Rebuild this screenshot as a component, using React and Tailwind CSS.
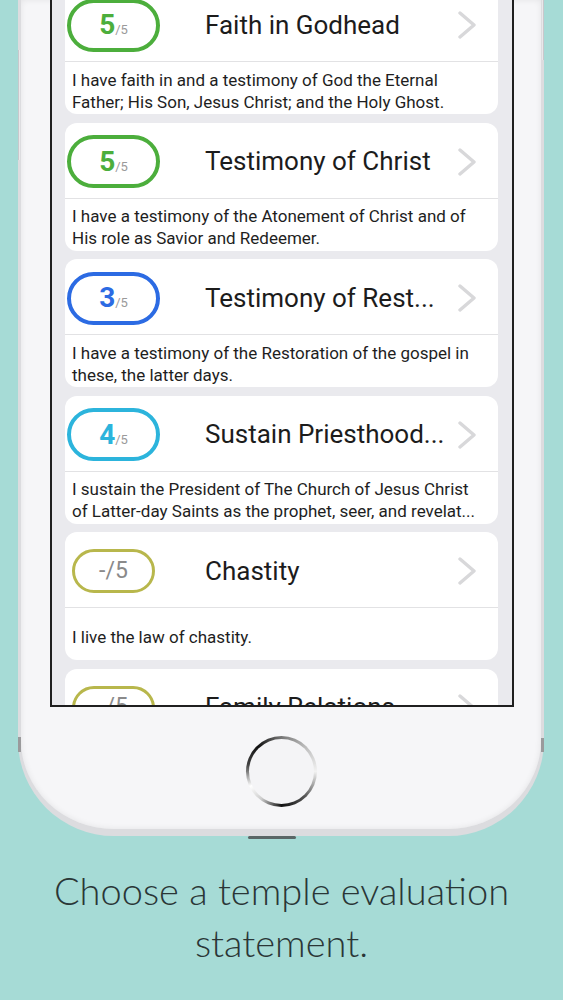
import React from 'react'

const items = [
  { score: '5', color: 'green', title: 'Faith in Godhead', text: 'I have faith in and a testimony of God the Eternal Father; His Son, Jesus Christ; and the Holy Ghost.' },
  { score: '5', color: 'green', title: 'Testimony of Christ', text: 'I have a testimony of the Atonement of Christ and of His role as Savior and Redeemer.' },
  { score: '3', color: 'blue', title: 'Testimony of Rest...', text: 'I have a testimony of the Restoration of the gospel in these, the latter days.' },
  { score: '4', color: 'cyan', title: 'Sustain Priesthood...', text: 'I sustain the President of The Church of Jesus Christ of Latter-day Saints as the prophet, seer, and revelat...' },
  { score: null, color: 'olive', title: 'Chastity', text: 'I live the law of chastity.' },
  { score: null, color: 'olive', title: 'Family Relations', text: 'I strive to keep the covenants I have made.' },
]

const pillStyles = {
  green: 'border-[#4cae3c] text-[#4cae3c]',
  blue: 'border-[#2c6be3] text-[#2c6be3]',
  cyan: 'border-[#2cb4dc] text-[#2cb4dc]',
}

const Pill = ({ score, color }) => {
  if (!score) {
    return (
      <div className="w-[83px] h-[44px] rounded-full border-[3px] border-[#b8b74c] flex items-center justify-center text-[23px] text-[#8a8a8a]">
        -/5
      </div>
    )
  }
  return (
    <div className={`w-[93px] h-[53px] rounded-full border-[4px] flex items-center justify-center ${pillStyles[color]}`}>
      <span className="text-[28px] font-bold leading-none">{score}</span>
      <span className="text-[13px] text-[#9a9a9a] leading-none mt-[9px]">/5</span>
    </div>
  )
}

const Chevron = () => (
  <svg width="22" height="28" viewBox="0 0 22 28" fill="none">
    <path d="M4 2 L18 14 L4 26" stroke="#d8d8da" strokeWidth="3.4" strokeLinecap="round" strokeLinejoin="round" />
  </svg>
)

const Card = ({ item }) => (
  <div className="bg-white rounded-[12px] overflow-hidden">
    <div className="h-[75px] pt-[3px] flex items-center">
      <div className="w-[97px] flex justify-center">
        <Pill score={item.score} color={item.color} />
      </div>
      <div className="ml-[43px] flex-1 text-[26px] text-[#1c1c1c] whitespace-nowrap overflow-hidden">{item.title}</div>
      <div className="pr-[20px] pl-2 flex items-center">
        <Chevron />
      </div>
    </div>
    <div className="h-px bg-[#e2e2e4]" />
    <div className="h-[52px] pt-[5px] pl-[7px] pr-[10px] flex items-center text-[17px] leading-[22px] text-[#1e1e1e]">
      <p>{item.text}</p>
    </div>
  </div>
)

export default function App() {
  return (
    <div className="w-[563px] h-[1000px] bg-[#a6dbd6] overflow-hidden relative" style={{ fontFamily: 'Roboto, "Noto Sans", sans-serif' }}>
      {/* phone body */}
      <div className="relative ml-[18px] w-[526px] h-[836px] rounded-b-[96px] bg-[#f6f6f8] border-x-[3px] border-b-[7px] border-[#dcdcdf] shadow-[inset_0_0_6px_rgba(0,0,0,0.08)] flex flex-col">
        {/* screen */}
        <div className="ml-[29px] w-[464px] h-[707px] border-x-2 border-b-2 border-[#1f1f1f] bg-[#eaeaee] overflow-hidden">
          <div className="-mt-[14px] pl-[13px] pr-[14px] flex flex-col gap-[8.5px]">
            {items.map((item, i) => (
              <Card key={i} item={item} />
            ))}
          </div>
        </div>
        {/* home button */}
        <div className="flex-1 flex justify-center pt-[29px]">
          <div className="w-[71px] h-[71px] rounded-full p-[3px] bg-[conic-gradient(#777,#bbb_12%,#f2f2f2_25%,#555_38%,#111_50%,#ccc_60%,#fff_68%,#444_78%,#111_88%,#777)]">
            <div className="w-full h-full rounded-full bg-[#f4f4f6]" />
          </div>
        </div>
        {/* side buttons */}
        <div className="absolute -left-[3px] top-[737px] w-[3px] h-[15px] bg-[#9a9a9c]" />
        <div className="absolute -right-[3px] top-[738px] w-[3px] h-[14px] bg-[#9a9a9c]" />
        <div className="absolute -left-[3px] top-[50px] w-[2px] h-[110px] bg-[#e8e8ea] border-l border-[#c8c8cc]" />
        <div className="absolute -right-[3px] top-0 w-[2px] h-[60px] bg-[#e8e8ea] border-r border-[#c8c8cc]" />
        <div className="absolute left-[227px] -bottom-[10px] w-[48px] h-[3px] rounded-full bg-[#5a6666]" />
      </div>

      {/* caption */}
      <div className="mt-[28px] text-center text-[38px] leading-[52px] text-[#2a3636] font-light" style={{ fontFamily: 'Lato, "Open Sans", sans-serif' }}>
        Choose a temple evaluation
        <br />
        statement.
      </div>
    </div>
  )
}
